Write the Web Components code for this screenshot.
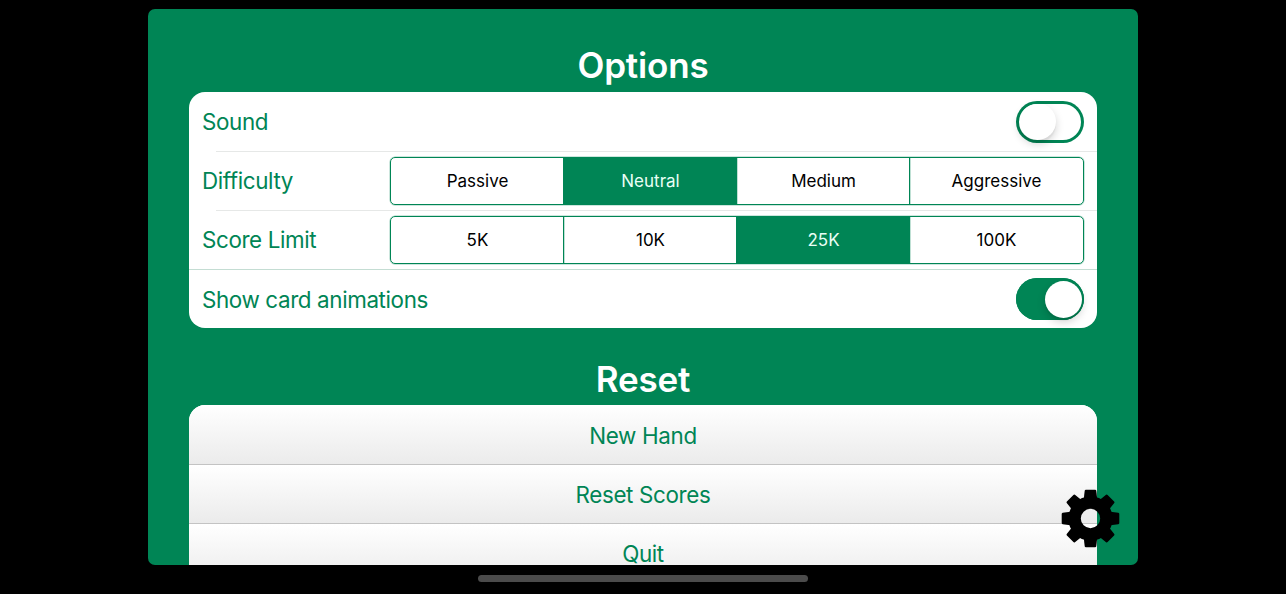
<!DOCTYPE html>
<html lang="en">
<head>
<meta charset="utf-8">
<title>Options</title>
<style>
html, body {
    margin: 0;
    height: 100%;
    overflow: hidden;
    background: #000;
}
</style>
</head>
<body>
<options-screen>
    <option-group class="top" heading="Options">
        <option-row class="first" label="Sound" line="inset"><toggle-switch></toggle-switch></option-row>
        <option-row label="Difficulty" line="inset">
            <segment-control options="Passive,Neutral,Medium,Aggressive" selected="1"></segment-control>
        </option-row>
        <option-row label="Score Limit" line="full">
            <segment-control options="5K,10K,25K,100K" selected="2"></segment-control>
        </option-row>
        <option-row label="Show card animations"><toggle-switch on></toggle-switch></option-row>
    </option-group>
    <option-group heading="Reset">
        <action-row class="first">New Hand</action-row>
        <action-row>Reset Scores</action-row>
        <action-row>Quit</action-row>
    </option-group>
    <gear-button slot="overlay"></gear-button>
</options-screen>

<script>
// Shared base: clones the template string of the subclass into its shadow root
class BaseElement extends HTMLElement {
    constructor() {
        super();
        const template = document.createElement("template");
        template.innerHTML = this.constructor.templateString;
        this.attachShadow({ mode: "open" });
        this.shadowRoot.appendChild(template.content.cloneNode(true));
    }
}

class OptionsScreen extends BaseElement {
    static templateString = `
<style>
:host {
    --green: #008555;
    display: flex;
    flex-direction: column;
    align-items: center;
    box-sizing: border-box;
    width: 1286px;
    height: 594px;
    padding-top: 9px;
    background: #000;
    color: var(--green);
    font-family: Inter, "Liberation Sans", sans-serif;
    user-select: none;
}

#panel {
    position: relative;
    box-sizing: border-box;
    width: 990px;
    height: 556px;
    padding: 31px 41px 0;
    border-radius: 7px;
    background: var(--green);
    overflow: hidden;
}

#list {
    display: flex;
    flex-direction: column;
    gap: 25px;
}

#home {
    width: 330px;
    height: 7px;
    margin-top: 10px;
    border-radius: 4px;
    background: #4b4b4b;
}
</style>
<div id="panel">
    <div id="list"><slot></slot></div>
    <slot name="overlay"></slot>
</div>
<div id="home"></div>
`;
}

class OptionGroup extends BaseElement {
    static templateString = `
<style>
:host {
    display: block;
}

h2 {
    height: 52px;
    margin: 0;
    line-height: 52px;
    font-size: 35px;
    font-weight: 600;
    letter-spacing: -0.15px;
    text-align: center;
    color: #fff;
}

:host(.top) h2 {
    line-height: 51px;
}

#card {
    border-radius: 16px;
    background: #fff;
    overflow: hidden;
}
</style>
<h2></h2>
<div id="card"><slot></slot></div>
`;

    connectedCallback() {
        this.shadowRoot.querySelector("h2").textContent = this.getAttribute("heading");
    }
}

class OptionRow extends BaseElement {
    static templateString = `
<style>
:host {
    display: flex;
    align-items: center;
    justify-content: space-between;
    box-sizing: border-box;
    height: 59px;
    padding: 0 13px 2px 13.5px;
    font-size: 22.4px;
    letter-spacing: -0.38px;
    background: linear-gradient(#e6e8e7, #e6e8e7) no-repeat 27px 100% / 0 1px;
}

:host(.first) {
    height: 60px;
    padding-bottom: 1px;
}

:host([line="inset"]) {
    background-size: 100% 1px;
}

:host([line="full"]) {
    background: linear-gradient(#c4ddd3, #c4ddd3) no-repeat 0 100% / 100% 1px;
}

:host(:not([line])) {
    height: 58px;
    padding-bottom: 0;
}

:host(:not([line])) span {
    padding-bottom: 0;
}

span {
    padding-bottom: 1px;
    margin-left: -0.5px;
    font-weight: 380;
}
</style>
<span></span>
<slot></slot>
`;

    connectedCallback() {
        this.shadowRoot.querySelector("span").textContent = this.getAttribute("label");
    }
}

class ToggleSwitch extends BaseElement {
    static templateString = `
<style>
:host {
    display: flex;
    box-sizing: border-box;
    width: 68px;
    height: 42px;
    padding: 2.5px;
    border-radius: 21px;
    background: #fff;
    box-shadow: inset 0 0 0 3px var(--green);
}

:host([on]) {
    justify-content: flex-end;
    background: var(--green);
}

#knob {
    width: 37px;
    height: 37px;
    border-radius: 50%;
    background: #fff;
    box-shadow: 0 4px 8px rgba(0, 0, 0, 0.18), 0 3px 1px rgba(0, 0, 0, 0.04);
}

:host(:not([on])) #knob {
    background: radial-gradient(#fff 17px, rgba(255, 255, 255, 0) 18px);
}
</style>
<div id="knob"></div>
`;
}

class SegmentControl extends BaseElement {
    static templateString = `
<style>
:host {
    display: flex;
    box-sizing: border-box;
    width: 694px;
    height: 48px;
    border: 1px solid var(--green);
    border-radius: 5px;
    box-shadow: 0 0 0 0.5px rgba(0, 133, 85, 0.4);
    overflow: hidden;
}

.segment {
    box-sizing: border-box;
    width: 25%;
    display: flex;
    align-items: center;
    justify-content: center;
    font-size: 17px;
    letter-spacing: 0;
    color: #000;
}

.segment + .segment {
    margin-left: -1px;
    width: calc(25% + 1px);
    border-left: 1px solid var(--green);
    box-shadow: inset 0.5px 0 rgba(0, 133, 85, 0.5);
}

.selected {
    background: var(--green);
    color: #e9fff6;
}
</style>
`;

    connectedCallback() {
        const selected = Number(this.getAttribute("selected"));
        this.getAttribute("options").split(",").forEach((name, idx) => {
            const segment = document.createElement("div");
            segment.classList.add("segment");
            segment.classList.toggle("selected", idx === selected);
            segment.textContent = name;
            this.shadowRoot.append(segment);
        });
    }
}

class ActionRow extends BaseElement {
    static templateString = `
<style>
:host {
    display: flex;
    align-items: center;
    justify-content: center;
    box-sizing: border-box;
    height: 59px;
    border-bottom: 1px solid #c3c3c3;
    font-size: 22.4px;
    font-weight: 380;
    letter-spacing: -0.35px;
    background: linear-gradient(#fff, #ebebeb);
}

:host(.first) {
    height: 60px;
    padding-top: 1px;
}
</style>
<slot></slot>
`;
}

class GearButton extends BaseElement {
    static templateString = `
<style>
:host {
    position: absolute;
    right: 18px;
    bottom: 17px;
    width: 59px;
    height: 59px;
}

svg {
    display: block;
}
</style>
<svg width="59" height="59" viewBox="-29.5 -29.5 59 59">
    <circle r="15.9" fill="none" stroke="#000" stroke-width="12.4"/>
</svg>
`;

    connectedCallback() {
        // eight teeth around the ring
        const svg = this.shadowRoot.querySelector("svg");
        for (let angle = 0; angle < 360; angle += 45) {
            const tooth = document.createElementNS("http://www.w3.org/2000/svg", "path");
            tooth.setAttribute("d", "M-6.9 -18L-5.8 -27.8Q-5.6 -28.8 -4.6 -28.8H4.6Q5.6 -28.8 5.8 -27.8L6.9 -18Z");
            tooth.setAttribute("transform", `rotate(${angle})`);
            svg.append(tooth);
        }
    }
}

window.customElements.define("options-screen", OptionsScreen);
window.customElements.define("option-group", OptionGroup);
window.customElements.define("option-row", OptionRow);
window.customElements.define("toggle-switch", ToggleSwitch);
window.customElements.define("segment-control", SegmentControl);
window.customElements.define("action-row", ActionRow);
window.customElements.define("gear-button", GearButton);
</script>
</body>
</html>
